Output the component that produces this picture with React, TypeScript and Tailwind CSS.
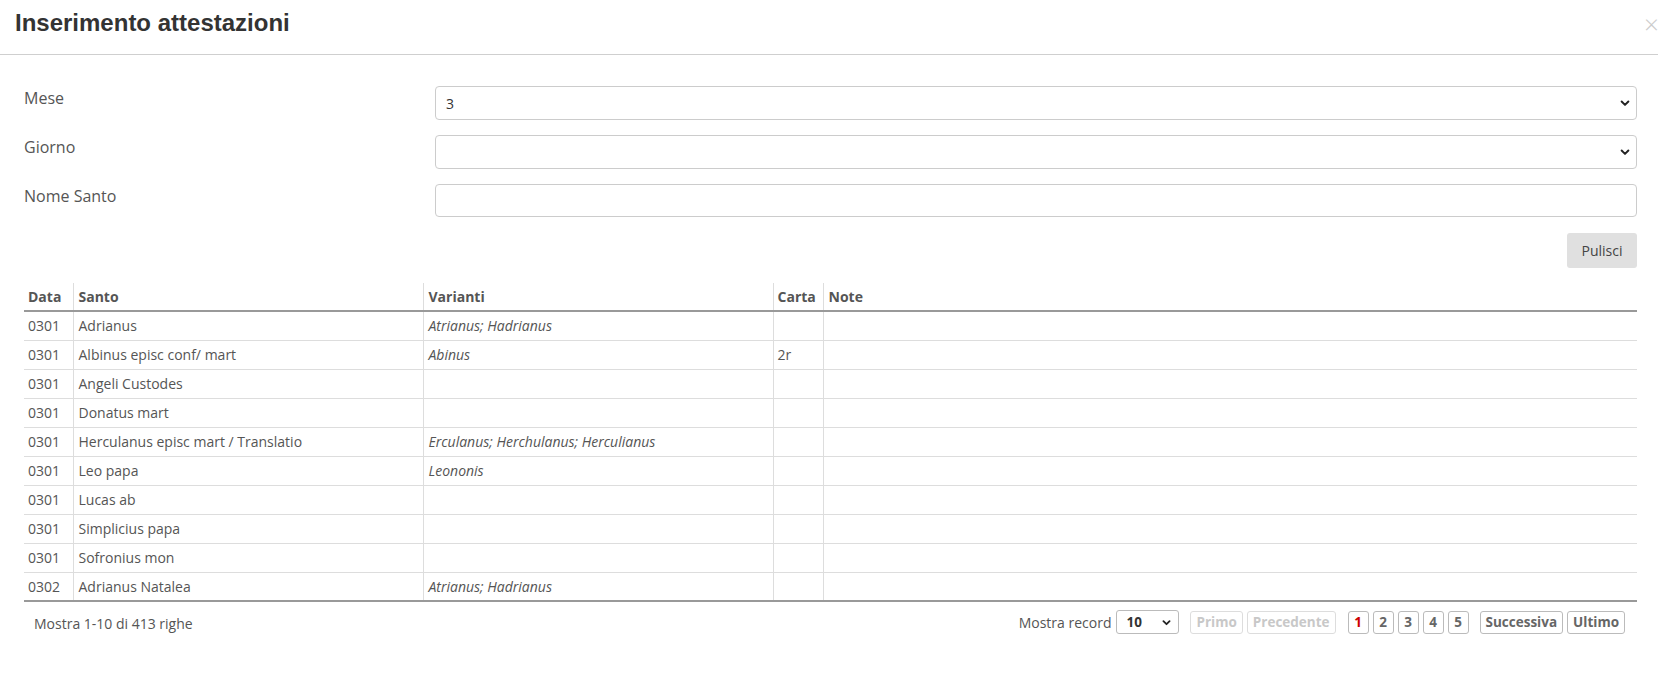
import React from "react";

const rows = [
  { data: "0301", santo: "Adrianus", varianti: "Atrianus; Hadrianus", carta: "" },
  { data: "0301", santo: "Albinus episc conf/ mart", varianti: "Abinus", carta: "2r" },
  { data: "0301", santo: "Angeli Custodes", varianti: "", carta: "" },
  { data: "0301", santo: "Donatus mart", varianti: "", carta: "" },
  { data: "0301", santo: "Herculanus episc mart / Translatio", varianti: "Erculanus; Herchulanus; Herculianus", carta: "" },
  { data: "0301", santo: "Leo papa", varianti: "Leononis", carta: "" },
  { data: "0301", santo: "Lucas ab", varianti: "", carta: "" },
  { data: "0301", santo: "Simplicius papa", varianti: "", carta: "" },
  { data: "0301", santo: "Sofronius mon", varianti: "", carta: "" },
  { data: "0302", santo: "Adrianus Natalea", varianti: "Atrianus; Hadrianus", carta: "" },
];

const Chevron = ({ size = 12 }: { size?: number }) => (
  <svg width={size} height={size} viewBox="0 0 16 16">
    <path d="M3.5 6l4.5 4.5 4.5-4.5" fill="none" stroke="#222" strokeWidth="2.6" strokeLinecap="round" strokeLinejoin="round" />
  </svg>
);

const SelectBox = ({ value }: { value: string }) => (
  <div className="h-[34px] border border-[#ccc] rounded-[4px] flex items-center justify-between pl-2.5 pr-[5px] text-[14px] text-[#333]">
    <span>{value}</span>
    <Chevron />
  </div>
);

const PageBtn = ({ label, tone = "normal", square = false }: { label: string; tone?: "normal" | "disabled" | "active"; square?: boolean }) => (
  <span
    className={
      "h-[23px] border rounded-[3px] flex items-center justify-center text-[13.5px] font-bold " +
      (square ? "w-[21px] " : "px-[5px] ") +
      (tone === "disabled" ? "text-[#c8c8c8] border-[#ddd]" : tone === "active" ? "text-[#cc0000] border-[#bbb]" : "text-[#666] border-[#bbb]")
    }
  >
    {label}
  </span>
);

export default function App() {
  return (
    <div className="w-[1658px] h-[677px] bg-white overflow-hidden" style={{ fontFamily: "'Open Sans', sans-serif" }}>
      <header className="h-[55px] border-b border-[#cfcfcf] flex items-center pl-[15px] relative">
        <h1 className="text-[24px] font-bold text-[#333] pb-[9px]" style={{ fontFamily: "'Liberation Sans', Arial, sans-serif" }}>
          Inserimento attestazioni
        </h1>
        <span className="absolute left-[1644px] top-[11px] text-[#ccc] text-[26px] leading-none font-light">×</span>
      </header>

      <div className="pl-[24px] pr-[21px] pt-[31px]">
        <div className="flex flex-col gap-[15px]">
          <div className="flex">
            <label className="w-[411px] text-[16px] text-[#555]">Mese</label>
            <div className="flex-1"><SelectBox value="3" /></div>
          </div>
          <div className="flex">
            <label className="w-[411px] text-[16px] text-[#555]">Giorno</label>
            <div className="flex-1"><SelectBox value="" /></div>
          </div>
          <div className="flex">
            <label className="w-[411px] text-[16px] text-[#555]">Nome Santo</label>
            <div className="flex-1 h-[33px] border border-[#ccc] rounded-[4px]" />
          </div>
        </div>

        <div className="flex justify-end mt-[16px]">
          <button className="h-[35px] w-[70px] bg-[#e0e0e0] rounded-[3px] text-[14px] text-[#444]">Pulisci</button>
        </div>

        <table className="w-full mt-[15px] border-collapse text-[14px] text-[#555]">
          <thead>
            <tr className="h-[28px] border-b-2 border-[#999]">
              <th className="w-[49px] text-left font-bold px-[4px] border-r border-[#ddd]">Data</th>
              <th className="w-[350px] text-left font-bold px-[5px] border-r border-[#ddd]">Santo</th>
              <th className="w-[350px] text-left font-bold px-[5px] border-r border-[#ddd]">Varianti</th>
              <th className="w-[50px] text-left font-bold px-[4px] border-r border-[#ddd]">Carta</th>
              <th className="text-left font-bold px-[5px]">Note</th>
            </tr>
          </thead>
          <tbody>
            {rows.map((r, i) => (
              <tr key={i} className={"h-[29px] " + (i === rows.length - 1 ? "border-b-2 border-[#999]" : "border-b border-[#ddd]")}>
                <td className="px-[4px] border-r border-[#ddd]">{r.data}</td>
                <td className="px-[5px] border-r border-[#ddd]">{r.santo}</td>
                <td className="px-[5px] border-r border-[#ddd] italic">{r.varianti}</td>
                <td className="px-[4px] border-r border-[#ddd]">{r.carta}</td>
                <td className="px-[5px]"></td>
              </tr>
            ))}
          </tbody>
        </table>

        <div className="flex items-center justify-between mt-[8px] pr-[12px]">
          <span className="text-[14px] text-[#555] pl-[10px] pt-[3px]">Mostra 1-10 di 413 righe</span>
          <div className="flex items-center gap-[4px]">
            <span className="text-[14px] text-[#555] mr-[1px]">Mostra record</span>
            <div className="h-[24px] w-[63px] border border-[#bbb] rounded-[3px] flex items-center justify-between pl-[9px] pr-[6px] text-[13.5px] font-bold text-[#333]">
              <span>10</span>
              <Chevron size={11} />
            </div>
            <span className="w-[3px]" />
            <PageBtn label="Primo" tone="disabled" />
            <PageBtn label="Precedente" tone="disabled" />
            <span className="w-[4px]" />
            <PageBtn label="1" tone="active" square />
            <PageBtn label="2" square />
            <PageBtn label="3" square />
            <PageBtn label="4" square />
            <PageBtn label="5" square />
            <span className="w-[3px]" />
            <PageBtn label="Successiva" />
            <PageBtn label="Ultimo" />
          </div>
        </div>
      </div>
    </div>
  );
}
